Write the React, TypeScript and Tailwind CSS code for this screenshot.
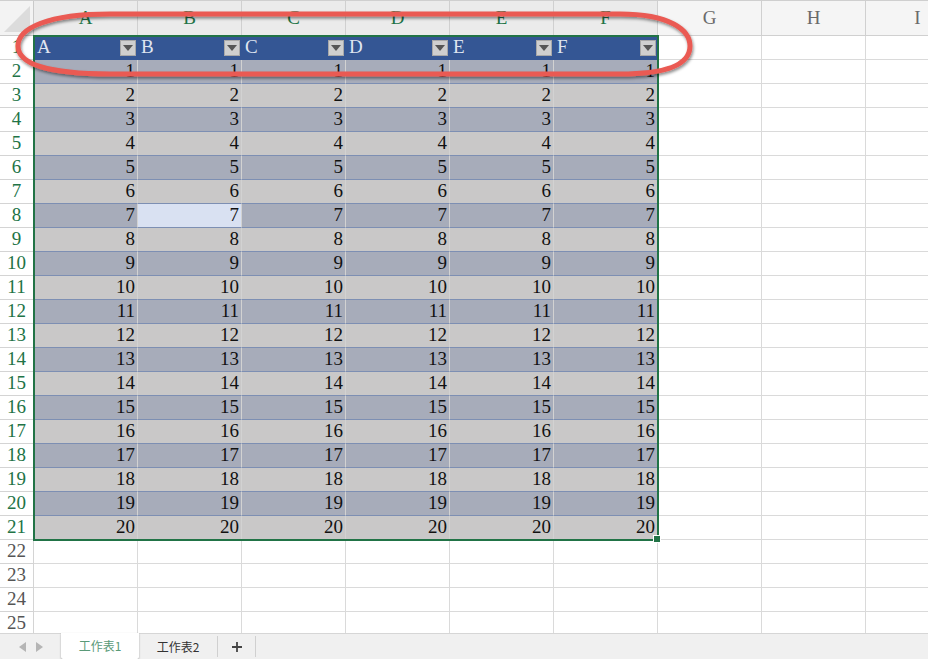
import React from "react";

const cols = ["A", "B", "C", "D", "E", "F", "G", "H", "I"];
const serif = { fontFamily: '"Liberation Serif", "Noto Sans CJK TC", serif' };

function FilterButton() {
  return (
    <div className="w-[16px] h-[16px] bg-[#cfcfcf] border border-[#a8a8a8] flex items-center justify-center shrink-0">
      <svg width="10" height="6" viewBox="0 0 10 6">
        <path d="M0 0 L10 0 L5 6 Z" fill="#555" />
      </svg>
    </div>
  );
}

function Row({ n }: { n: number }) {
  const inTable = n <= 21;
  const header = n === 1;
  const dark = n % 2 === 0;
  return (
    <div className="flex h-[24px] shrink-0">
      <div
        className={`w-[34px] shrink-0 border-r border-b border-[#d4d4d4] bg-white flex items-center justify-center text-[19px] ${
          inTable ? "text-[#217346]" : "text-[#555]"
        }`}
        style={serif}
      >
        {n}
      </div>
      {cols.map((c, i) => {
        if (!inTable || i > 5) {
          return <div key={c} className="w-[104px] shrink-0 border-r border-b border-[#dadada] bg-white" />;
        }
        if (header) {
          return (
            <div
              key={c}
              className="w-[104px] shrink-0 bg-[#345694] border-b border-[#345694] flex items-center justify-between pl-[3px] pr-[2px] text-[19px] text-[#dfe5f0]"
              style={serif}
            >
              <span>{c}</span>
              <FilterButton />
            </div>
          );
        }
        const selected = n === 8 && i === 1;
        return (
          <div
            key={c}
            className={`w-[104px] shrink-0 border-r border-b border-r-[#d2d2d2] border-b-[#7d8fb3] flex items-center justify-end pr-[2px] text-[19px] text-[#111] ${
              selected ? "bg-[#d9e1f2]" : dark ? "bg-[#a7acba]" : "bg-[#c9c8c8]"
            }`}
            style={serif}
          >
            {n - 1}
          </div>
        );
      })}
    </div>
  );
}

export default function App() {
  const rows = Array.from({ length: 25 }, (_, i) => i + 1);
  return (
    <div className="w-[928px] h-[659px] overflow-hidden bg-white flex flex-col relative">
      <div className="flex-1 overflow-hidden flex flex-col">
        <div className="flex h-[36px] shrink-0 border-t border-[#cfcfcf]">
          <div className="w-[34px] shrink-0 bg-[#f3f3f3] border-r border-b border-[#c9c9c9] flex items-end justify-end p-[3px]">
            <svg width="26" height="26" viewBox="0 0 26 26">
              <path d="M26 0 L26 26 L0 26 Z" fill="#dcdcdc" />
            </svg>
          </div>
          {cols.map((c, i) => (
            <div
              key={c}
              className={`w-[104px] shrink-0 border-r border-b border-[#d0d0d0] flex items-center justify-center text-[19px] ${
                i <= 5 ? "bg-[#ebebeb] text-[#217346]" : "bg-[#f5f5f5] text-[#6a6a6a]"
              }`}
              style={serif}
            >
              {c}
            </div>
          ))}
        </div>
        {rows.map((n) => (
          <Row key={n} n={n} />
        ))}
      </div>

      <div className="h-[26px] shrink-0 bg-[#f0f0f0] border-t border-[#d6d6d6] flex items-stretch text-[12px] text-[#333]" style={{ fontFamily: '"Noto Sans CJK TC", sans-serif' }}>
        <div className="w-[61px] flex items-center justify-center gap-[10px] text-[#b5b5b5]">
          <svg width="7" height="10" viewBox="0 0 7 10"><path d="M7 0 L7 10 L0 5 Z" fill="#b5b5b5" /></svg>
          <svg width="7" height="10" viewBox="0 0 7 10"><path d="M0 0 L0 10 L7 5 Z" fill="#b5b5b5" /></svg>
        </div>
        <div className="w-[78px] -mt-px bg-white flex items-center justify-center text-[#5a9a78] shadow-[0_1px_2px_rgba(0,0,0,0.35)] rounded-b-[2px]">
          工作表1
        </div>
        <div className="w-[79px] flex items-center justify-center border-r border-[#d0d0d0] my-[2px]">工作表2</div>
        <div className="w-[38px] flex items-center justify-center border-r border-[#d0d0d0] my-[2px]">
          <svg width="12" height="12" viewBox="0 0 12 12">
            <path d="M6 1 V11 M1 6 H11" stroke="#444" strokeWidth="1.8" />
          </svg>
        </div>
      </div>

      <div className="absolute left-[33px] top-[35px] w-[626px] h-[506px] border-2 border-[#217346] pointer-events-none" />
      <div className="absolute left-[653px] top-[535px] w-[8px] h-[8px] bg-[#217346] border border-white" />

      <svg className="absolute left-0 top-0 pointer-events-none" width="928" height="100" viewBox="0 0 928 100">
        <defs>
          <filter id="sh" x="-10%" y="-50%" width="120%" height="200%">
            <feDropShadow dx="1" dy="2" stdDeviation="1.5" floodColor="#000" floodOpacity="0.45" />
          </filter>
        </defs>
        <path
          d="M110 14 L620 14 C670 14 690 30 690 46 C690 64 668 74 620 74 L110 74 C48 74 18 64 18 46 C18 28 48 14 110 14 Z"
          fill="none"
          stroke="#ea5a52"
          strokeWidth="5"
          filter="url(#sh)"
        />
      </svg>
    </div>
  );
}
